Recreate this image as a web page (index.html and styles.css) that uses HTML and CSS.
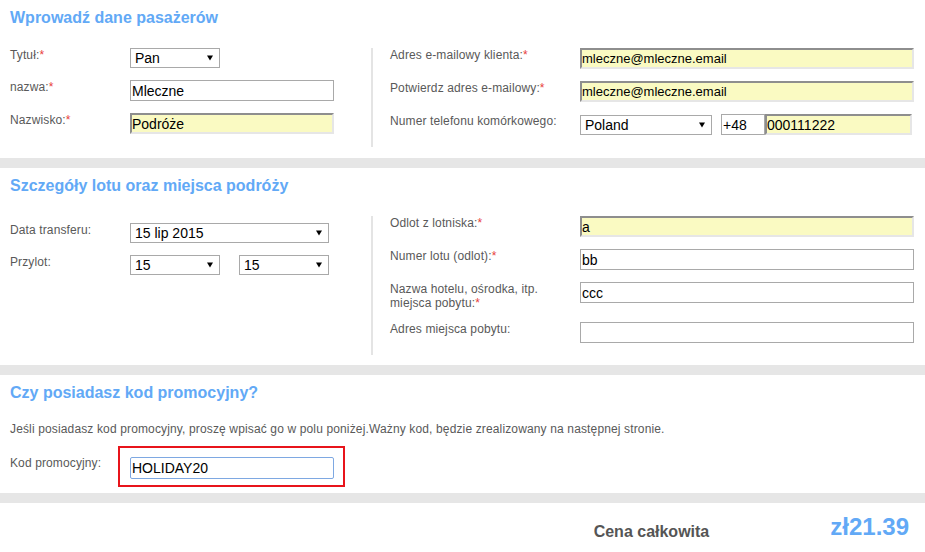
FILE: index.html
```html
<!DOCTYPE html>
<html lang="pl">
<head>
<meta charset="utf-8">
<title>Dane pasażerów</title>
<link rel="stylesheet" href="styles.css">
</head>
<body>
<div class="page">

  <section class="panel panel-first">
    <h2 class="title">Wprowadź dane pasażerów</h2>
    <div class="cols">
      <div class="col col-left">
        <div class="row">
          <span class="lbl">Tytuł:<span class="req">*</span></span>
          <div class="select w90"><span>Pan</span><svg class="arr" width="6" height="6" viewBox="0 0 6 6"><path d="M0 0.5H6L3 5.5Z"/></svg></div>
        </div>
        <div class="row">
          <span class="lbl">nazwa:<span class="req">*</span></span>
          <input class="field w204" type="text" value="Mleczne">
        </div>
        <div class="row">
          <span class="lbl">Nazwisko:<span class="req">*</span></span>
          <input class="field yellow w204" type="text" value="Podróże">
        </div>
      </div>
      <div class="col col-right">
        <div class="row">
          <span class="lbl">Adres e-mailowy klienta:<span class="req">*</span></span>
          <input class="field yellow wfull small" type="text" value="mleczne@mleczne.email">
        </div>
        <div class="row">
          <span class="lbl">Potwierdz adres e-mailowy:<span class="req">*</span></span>
          <input class="field yellow wfull small" type="text" value="mleczne@mleczne.email">
        </div>
        <div class="row">
          <span class="lbl">Numer telefonu komórkowego:</span>
          <div class="phone">
            <div class="select w132"><span>Poland</span><svg class="arr" width="6" height="6" viewBox="0 0 6 6"><path d="M0 0.5H6L3 5.5Z"/></svg></div>
            <input class="field prefix" type="text" value="+48">
            <input class="field yellow number" type="text" value="000111222">
          </div>
        </div>
      </div>
    </div>
  </section>

  <div class="band"></div>

  <section class="panel">
    <h2 class="title">Szczegóły lotu oraz miejsca podróży</h2>
    <div class="cols">
      <div class="col col-left offset">
        <div class="row">
          <span class="lbl">Data transferu:</span>
          <div class="select w199"><span>15 lip 2015</span><svg class="arr" width="6" height="6" viewBox="0 0 6 6"><path d="M0 0.5H6L3 5.5Z"/></svg></div>
        </div>
        <div class="row">
          <span class="lbl">Przylot:</span>
          <div class="pair">
            <div class="select w90"><span>15</span><svg class="arr" width="6" height="6" viewBox="0 0 6 6"><path d="M0 0.5H6L3 5.5Z"/></svg></div>
            <div class="select w90"><span>15</span><svg class="arr" width="6" height="6" viewBox="0 0 6 6"><path d="M0 0.5H6L3 5.5Z"/></svg></div>
          </div>
        </div>
      </div>
      <div class="col col-right">
        <div class="row">
          <span class="lbl">Odlot z lotniska:<span class="req">*</span></span>
          <input class="field yellow wfull" type="text" value="a">
        </div>
        <div class="row">
          <span class="lbl">Numer lotu (odlot):<span class="req">*</span></span>
          <input class="field wfull" type="text" value="bb">
        </div>
        <div class="row">
          <span class="lbl">Nazwa hotelu, ośrodka, itp.<br>miejsca pobytu:<span class="req">*</span></span>
          <input class="field wfull" type="text" value="ccc">
        </div>
        <div class="row">
          <span class="lbl">Adres miejsca pobytu:</span>
          <input class="field wfull" type="text" value="">
        </div>
      </div>
    </div>
  </section>

  <div class="band"></div>

  <section class="panel panel-promo">
    <h2 class="title">Czy posiadasz kod promocyjny?</h2>
    <p class="note">Jeśli posiadasz kod promocyjny, proszę wpisać go w polu poniżej.Ważny kod, będzie zrealizowany na następnej stronie.</p>
    <div class="promo-row">
      <span class="lbl promo-lbl">Kod promocyjny:</span>
      <div class="highlight">
        <input class="field focus w204" type="text" value="HOLIDAY20">
      </div>
    </div>
  </section>

  <div class="band"></div>

  <div class="total">
    <span class="total-label">Cena całkowita</span>
    <span class="price">zł21.39</span>
  </div>

</div>
</body>
</html>
```

FILE: styles.css
```css
* {
  box-sizing: border-box;
}

body {
  margin: 0;
  background: #fff;
  font-family: "Liberation Sans", Arial, sans-serif;
  color: #555;
}

.page {
  width: 925px;
}

.panel {
  padding: 8px 11px 10px 10px;
}

.panel-first {
  padding-bottom: 11px;
}

.panel-promo {
  padding-bottom: 6px;
}

.title {
  margin: 0 0 20px;
  font-size: 16px;
  line-height: 20px;
  font-weight: bold;
  color: #62a9f6;
}

.band {
  height: 10px;
  background: #e6e6e6;
}

.cols {
  display: flex;
}

.col {
  display: flex;
  flex-direction: column;
}

.col-left {
  width: 361px;
  flex: none;
}

.col-left.offset {
  padding-top: 7px;
}

.col-right {
  flex: 1;
  border-left: 2px solid #e4e4e4;
  padding-left: 17px;
}

.row {
  display: flex;
  align-items: flex-start;
  margin-bottom: 12px;
}

.lbl {
  flex: none;
  font-size: 12px;
  line-height: 14px;
  letter-spacing: 0.12px;
  color: #595959;
}

.col-left .lbl {
  width: 120px;
}

.col-right .lbl {
  width: 190px;
}

.req {
  color: #e8413c;
}

.field {
  display: block;
  height: 21px;
  margin: 0;
  padding: 0 1px;
  border: 1px solid #a9a9a9;
  background: #fff;
  font-family: "Liberation Sans", Arial, sans-serif;
  font-size: 14px;
  color: #000;
  outline: none;
}

.field.small {
  font-size: 13px;
}

.field.yellow {
  padding: 0;
  background: #fafac2;
  border-width: 2px;
  border-style: solid;
  border-color: #8e8e8e #e6e6e6 #e6e6e6 #8e8e8e;
}

.field.focus {
  height: 22px;
  border-color: #7ea8e2;
  border-radius: 2px;
}

.w204 {
  width: 204px;
}

.wfull {
  width: 334px;
}

.select {
  display: flex;
  align-items: center;
  justify-content: space-between;
  height: 20px;
  padding: 0 6px 0 4px;
  border: 1px solid #a9a9a9;
  background: #fff;
  font-size: 14px;
  color: #000;
}

.arr {
  display: block;
  flex: none;
  fill: #000;
}

.w90 {
  width: 90px;
}

.w132 {
  width: 132px;
}

.w199 {
  width: 199px;
}

.pair {
  display: flex;
  gap: 19px;
}

.phone {
  display: flex;
  align-items: flex-start;
}

.phone .select {
  margin-top: 1px;
}

.field.prefix {
  width: 44px;
  margin-left: 9px;
}

.field.number {
  width: 147px;
}

.note {
  margin: 0 0 10px;
  font-size: 12px;
  line-height: 13px;
  letter-spacing: 0.14px;
  color: #595959;
}

.promo-row {
  display: flex;
  align-items: flex-start;
}

.promo-lbl {
  width: 108px;
  padding-top: 10px;
}

.highlight {
  padding: 9px 9px 6px 10px;
  border: 2px solid #e8141b;
}

.total {
  display: flex;
  justify-content: flex-end;
  align-items: flex-start;
  padding: 10px 16px 0 0;
}

.total-label {
  margin-top: 9px;
  margin-right: 121px;
  font-size: 16px;
  line-height: 20px;
  font-weight: bold;
  color: #555;
}

.price {
  font-size: 24px;
  line-height: 28px;
  font-weight: bold;
  color: #62a9f6;
}
```
